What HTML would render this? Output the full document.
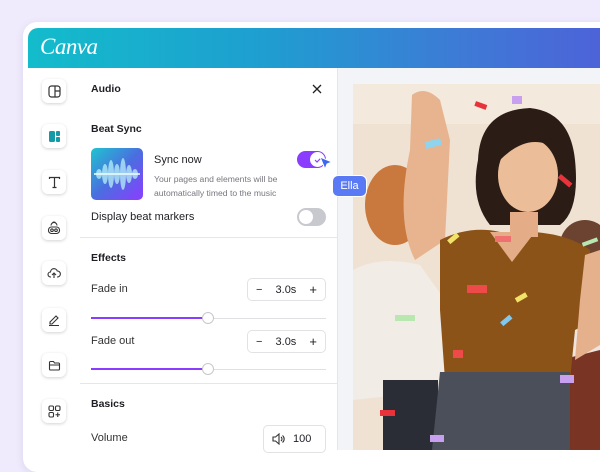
<!DOCTYPE html>
<html><head><meta charset="utf-8"><style>
*{margin:0;padding:0;box-sizing:border-box}
body{width:600px;height:450px;overflow:hidden;background:#efeafc;font-family:"Liberation Sans",sans-serif;color:#1e1e24;position:relative}
.card{position:absolute;left:23px;top:22px;width:600px;height:450px;background:#fff;border-radius:14px;box-shadow:0 2px 8px rgba(90,70,160,.12)}
.hdr{position:absolute;left:28px;top:28px;width:572px;height:40px;border-radius:10px 0 0 0;background:linear-gradient(90deg,#13bccb 0%,#1e9fd0 40%,#3d7bd6 75%,#4d63d8 100%)}
.logo{position:absolute;left:40px;top:34px;color:#fff;font-family:"Liberation Serif",serif;font-style:italic;font-size:23px;letter-spacing:-0.5px}
.side{position:absolute;left:28px;top:68px;width:52px;height:382px;background:#fff}
.ib{position:absolute;left:42px;width:24px;height:24px;background:#fff;border-radius:6px;box-shadow:0 1px 3px rgba(0,0,0,.18);display:flex;align-items:center;justify-content:center}
.panel{position:absolute;left:80px;top:68px;width:257px;height:382px;background:#fff}
.t{position:absolute;font-size:11px;white-space:nowrap}
.b{font-weight:bold;font-size:10.5px}
.hr{position:absolute;left:80px;width:257px;height:1px;background:#e6e6ea}
.canvas{position:absolute;left:337px;top:68px;width:263px;height:382px;background:#f3f4f7;border-left:1px solid #e6e6ea}
.step{position:absolute;left:247px;width:79px;height:23px;border:1px solid #e2e2e6;border-radius:5px;font-size:11px;display:flex;align-items:center;justify-content:space-between;padding:0 8px}
.sl{position:absolute;left:91px;width:235px;height:1px;background:#e0e0e4}
.slf{position:absolute;left:91px;width:117px;height:2px;background:#8b3dff}
.kn{position:absolute;left:202px;width:12px;height:12px;border-radius:50%;background:#fff;border:1px solid #c8c8cc}
</style></head><body>
<div class="card"></div>
<div class="hdr"></div>
<div class="logo">Canva</div>
<div class="side"></div>
<div class="ib" style="top:79px"><svg width="13" height="13" viewBox="0 0 13 13" fill="none" stroke="#333" stroke-width="1.2"><rect x="1" y="1" width="11" height="11" rx="2.5"/><path d="M7 1v11M7 6h5"/></svg></div>
<div class="ib" style="top:124px"><svg width="13" height="13" viewBox="0 0 13 13"><rect x="1" y="1" width="6" height="11" rx="1.5" fill="#139aa6"/><rect x="8" y="1" width="4" height="5" rx="1" fill="#139aa6"/><rect x="8" y="7" width="4" height="5" rx="1" fill="#139aa6"/></svg></div>
<div class="ib" style="top:170px"><svg width="13" height="13" viewBox="0 0 13 13" fill="none" stroke="#333" stroke-width="1.2"><path d="M1.5 3V1.5h10V3M6.5 1.5v10M4.5 11.5h4"/></svg></div>
<div class="ib" style="top:216px"><svg width="14" height="14" viewBox="0 0 14 14" fill="none" stroke="#333" stroke-width="1.1"><rect x="1.5" y="6" width="11" height="6.5" rx="3"/><path d="M4 4.5a3 3 0 0 1 6 0M5.5 2.5a1.5 1.5 0 0 1 3 0"/><circle cx="5" cy="9.2" r="1.3"/><circle cx="9" cy="9.2" r="1.3"/></svg></div>
<div class="ib" style="top:261px"><svg width="14" height="14" viewBox="0 0 14 14" fill="none" stroke="#333" stroke-width="1.1"><path d="M4 11H3.5a2.5 2.5 0 0 1 0-5 3.5 3.5 0 0 1 6.8-1A2.8 2.8 0 0 1 10.5 11H10M7 12V7M5 9l2-2 2 2"/></svg></div>
<div class="ib" style="top:308px"><svg width="14" height="14" viewBox="0 0 14 14" fill="none" stroke="#333" stroke-width="1.1"><path d="M3 9l6-6 2 2-6 6H3zM2 12.5h10"/></svg></div>
<div class="ib" style="top:353px"><svg width="13" height="13" viewBox="0 0 13 13" fill="none" stroke="#333" stroke-width="1.1"><path d="M1.5 3.5a1 1 0 0 1 1-1h3l1 1.5h4a1 1 0 0 1 1 1V10a1 1 0 0 1-1 1h-8a1 1 0 0 1-1-1zM1.5 6h10"/></svg></div>
<div class="ib" style="top:399px"><svg width="13" height="13" viewBox="0 0 13 13" fill="none" stroke="#333" stroke-width="1.1"><rect x="1" y="1" width="4.5" height="4.5" rx="1.2"/><rect x="7.5" y="1" width="4.5" height="4.5" rx="1.2"/><rect x="1" y="7.5" width="4.5" height="4.5" rx="1.2"/><path d="M9.75 7.5v4.5M7.5 9.75h4.5"/></svg></div>

<div class="canvas"></div>
<svg style="position:absolute;left:353px;top:84px" width="247" height="366" viewBox="353 84 247 366">
<rect x="353" y="84" width="247" height="366" fill="#efe2d2"/>
<rect x="353" y="84" width="247" height="40" fill="#f3e9dc"/>
<ellipse cx="395" cy="205" rx="30" ry="40" fill="#c9783e"/>
<path d="M353 270 Q380 255 420 265 L445 300 L445 390 L353 400Z" fill="#f1ece6"/>
<rect x="383" y="380" width="55" height="70" fill="#2a2d36"/>
<circle cx="585" cy="245" r="25" fill="#6b4330"/>
<path d="M565 350 Q585 330 600 340 L600 450 L555 450Z" fill="#7a3424"/>
<path d="M560 300 L600 300 L600 350 L560 360Z" fill="#eee6de"/>
<path d="M412 95 Q425 85 440 100 L450 140 L445 240 L415 260 Q395 220 410 150Z" fill="#e7b48f"/>
<path d="M440 240 Q470 225 500 232 L535 232 Q570 235 590 250 L595 320 L575 330 L570 380 L445 380 L440 310 Z" fill="#8c5318"/>
<path d="M490 232 L512 262 L535 232Z" fill="#e4ad87"/>
<path d="M585 255 L600 250 L600 345 L575 360 L580 300Z" fill="#e5b18d"/>
<path d="M478 160 Q480 110 530 108 Q570 112 575 160 Q580 210 560 225 L490 225 Q470 200 478 160Z" fill="#2b1d16"/>
<ellipse cx="528" cy="175" rx="30" ry="37" fill="#ebbd98"/>
<path d="M500 145 Q525 115 558 140 L558 150 Q530 130 500 160Z" fill="#2b1d16"/>
<rect x="510" y="212" width="28" height="25" fill="#e4ad87"/>
<path d="M440 372 L570 372 L570 450 L432 450Z" fill="#4b4f5a"/>
<g>
<rect x="475" y="103" width="12" height="5" fill="#e8333a" transform="rotate(20 481 105)"/>
<rect x="425" y="140" width="16" height="7" fill="#8fd3ec" transform="rotate(-15 433 143)"/>
<rect x="558" y="178" width="15" height="5" fill="#e8333a" transform="rotate(40 565 180)"/>
<rect x="512" y="96" width="10" height="8" fill="#c9a0ef"/>
<rect x="467" y="285" width="20" height="8" fill="#ef4a4a"/>
<rect x="500" y="318" width="12" height="5" fill="#7fc8ef" transform="rotate(-40 506 320)"/>
<rect x="515" y="295" width="12" height="5" fill="#f1e36a" transform="rotate(-30 521 297)"/>
<rect x="447" y="236" width="12" height="5" fill="#f1e36a" transform="rotate(-40 453 238)"/>
<rect x="453" y="350" width="10" height="8" fill="#ef4a4a"/>
<rect x="395" y="315" width="20" height="6" fill="#b8e8b0"/>
<rect x="560" y="375" width="14" height="8" fill="#c9a0ef"/>
<rect x="430" y="435" width="14" height="7" fill="#c9a0ef"/>
<rect x="380" y="410" width="15" height="6" fill="#e8333a"/>
<rect x="582" y="240" width="16" height="4" fill="#b8e8b0" transform="rotate(-20 590 242)"/>
<rect x="495" y="236" width="16" height="6" fill="#f07070"/>
</g>
</svg>

<div class="panel"></div>
<div class="t b" style="left:91px;top:83px">Audio</div>
<svg style="position:absolute;left:312px;top:84px" width="10" height="10" viewBox="0 0 10 10" stroke="#222" stroke-width="1.3"><path d="M1 1l8 8M9 1l-8 8"/></svg>
<div class="t b" style="left:91px;top:123px">Beat Sync</div>
<div style="position:absolute;left:91px;top:148px;width:52px;height:52px;border-radius:5px;background:linear-gradient(135deg,#1fc4cf 0%,#4a6ee0 50%,#8b3dff 100%);overflow:hidden">
<svg width="52" height="52" viewBox="0 0 52 52"><g fill="#b8f0f8" opacity=".75"><ellipse cx="8" cy="26" rx="3" ry="5"/><ellipse cx="14" cy="26" rx="3" ry="10"/><ellipse cx="20" cy="26" rx="3" ry="14"/><ellipse cx="26" cy="26" rx="3" ry="10"/><ellipse cx="32" cy="26" rx="3" ry="16"/><ellipse cx="38" cy="26" rx="3" ry="9"/><ellipse cx="44" cy="26" rx="3" ry="5"/></g><rect x="3" y="25" width="46" height="2" fill="#e8fbff" opacity=".8"/></svg></div>
<div class="t" style="left:154px;top:154px">Sync now</div>
<div class="t" style="left:154px;top:174px;font-size:8.6px;color:#77777f">Your pages and elements will be</div>
<div class="t" style="left:154px;top:188px;font-size:8.6px;color:#77777f">automatically timed to the music</div>
<div style="position:absolute;left:297px;top:151px;width:29px;height:17px;border-radius:9px;background:#8b3dff"></div>
<div style="position:absolute;left:310px;top:152px;width:15px;height:15px;border-radius:50%;background:#fff;display:flex;align-items:center;justify-content:center"><svg width="8" height="8" viewBox="0 0 8 8" fill="none" stroke="#8b3dff" stroke-width="1.2"><path d="M1 4l2 2 4-4"/></svg></div>
<div class="t" style="left:91px;top:211px">Display beat markers</div>
<div style="position:absolute;left:297px;top:208px;width:29px;height:18px;border-radius:9px;background:#c8c9ce"></div>
<div style="position:absolute;left:299px;top:210px;width:14px;height:14px;border-radius:50%;background:#fff"></div>
<div class="hr" style="top:237px"></div>
<div class="t b" style="left:91px;top:252px">Effects</div>
<div class="t" style="left:91px;top:283px;color:#333">Fade in</div>
<div class="step" style="top:278px"><span>−</span><span>3.0s</span><span style="font-size:13px">+</span></div>
<div class="sl" style="top:318px"></div><div class="slf" style="top:317px"></div><div class="kn" style="top:312px"></div>
<div class="t" style="left:91px;top:335px;color:#333">Fade out</div>
<div class="step" style="top:330px"><span>−</span><span>3.0s</span><span style="font-size:13px">+</span></div>
<div class="sl" style="top:369px"></div><div class="slf" style="top:368px"></div><div class="kn" style="top:363px"></div>
<div class="hr" style="top:383px"></div>
<div class="t b" style="left:91px;top:398px">Basics</div>
<div class="t" style="left:91px;top:432px;color:#333">Volume</div>
<div style="position:absolute;left:263px;top:425px;width:63px;height:28px;border:1px solid #e2e2e6;border-radius:5px;font-size:11px;display:flex;align-items:center;padding-left:8px;gap:8px"><svg width="13" height="12" viewBox="0 0 13 12" fill="none" stroke="#333" stroke-width="1.1"><path d="M1 4h2.5L7 1v10L3.5 8H1zM9 4a2.5 2.5 0 0 1 0 4M10.5 2.5a4.5 4.5 0 0 1 0 7"/></svg><span>100</span></div>

<svg style="position:absolute;left:318px;top:155px" width="16" height="16" viewBox="0 0 16 16"><path d="M2 2l12 5-5 2-2 5z" fill="#3f66f0" stroke="#fff" stroke-width="1"/></svg>
<div style="position:absolute;left:332px;top:175px;width:35px;height:22px;border-radius:6px;background:#5a7af5;border:1.5px solid #fff;color:#fff;font-size:11px;display:flex;align-items:center;justify-content:center">Ella</div>
</body></html>
